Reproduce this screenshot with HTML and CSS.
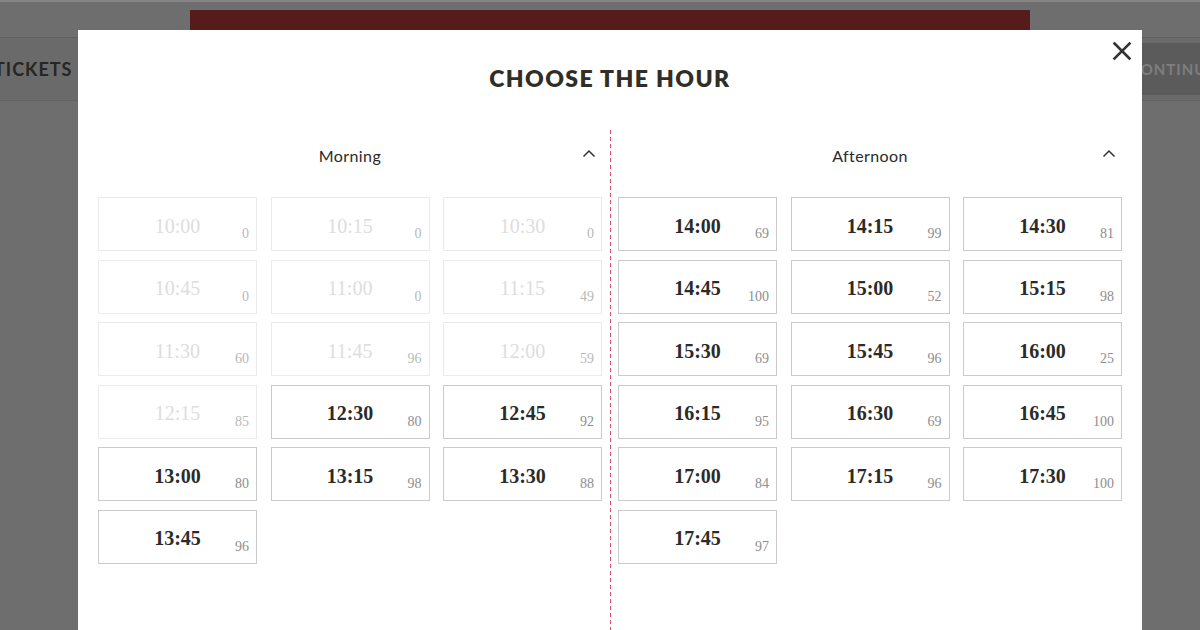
FILE: index.html
```html
<!DOCTYPE html>
<html lang="en">

<head>
    <meta charset="UTF-8">
    <meta name="viewport" content="width=device-width, initial-scale=1.0">
    <title>Choose the hour</title>
    <link rel="stylesheet" href="styles.css">
</head>

<body>
    <!-- page behind the dialog (dimmed) -->
    <div class="page">
        <div class="top_bar">
            <div class="brand_bar"><span class="brand_logo"></span></div>
        </div>
        <div class="nav_bar">
            <span class="nav_title">TICKETS</span>
            <span class="nav_button">CONTINUE</span>
        </div>
    </div>

    <!-- dialog -->
    <div class="hour_dialog">
        <span class="closed">
            <svg width="20" height="20" viewBox="0 0 20 20">
                <path d="M2.5 2.5 L17.5 17.5 M17.5 2.5 L2.5 17.5" stroke="#333" stroke-width="2.6" fill="none" stroke-linecap="square"/>
            </svg>
        </span>
        <div class="title">CHOOSE THE HOUR</div>
        <div class="columns">
            <div class="column">
                <div class="column_head">
                    <span class="column_name">Morning</span>
                    <svg class="chevron" width="14" height="9" viewBox="0 0 14 9">
                        <path d="M1.5 7.5 L7 2 L12.5 7.5" stroke="#333" stroke-width="1.5" fill="none"/>
                    </svg>
                </div>
                <div class="slots">
                    <div class="slot off"><span class="time">10:00</span><span class="count">0</span></div>
                    <div class="slot off"><span class="time">10:15</span><span class="count">0</span></div>
                    <div class="slot off"><span class="time">10:30</span><span class="count">0</span></div>
                    <div class="slot off"><span class="time">10:45</span><span class="count">0</span></div>
                    <div class="slot off"><span class="time">11:00</span><span class="count">0</span></div>
                    <div class="slot off"><span class="time">11:15</span><span class="count">49</span></div>
                    <div class="slot off"><span class="time">11:30</span><span class="count">60</span></div>
                    <div class="slot off"><span class="time">11:45</span><span class="count">96</span></div>
                    <div class="slot off"><span class="time">12:00</span><span class="count">59</span></div>
                    <div class="slot off"><span class="time">12:15</span><span class="count">85</span></div>
                    <div class="slot"><span class="time">12:30</span><span class="count">80</span></div>
                    <div class="slot"><span class="time">12:45</span><span class="count">92</span></div>
                    <div class="slot"><span class="time">13:00</span><span class="count">80</span></div>
                    <div class="slot"><span class="time">13:15</span><span class="count">98</span></div>
                    <div class="slot"><span class="time">13:30</span><span class="count">88</span></div>
                    <div class="slot"><span class="time">13:45</span><span class="count">96</span></div>
                </div>
            </div>
            <div class="divider"></div>
            <div class="column">
                <div class="column_head">
                    <span class="column_name">Afternoon</span>
                    <svg class="chevron" width="14" height="9" viewBox="0 0 14 9">
                        <path d="M1.5 7.5 L7 2 L12.5 7.5" stroke="#333" stroke-width="1.5" fill="none"/>
                    </svg>
                </div>
                <div class="slots">
                    <div class="slot"><span class="time">14:00</span><span class="count">69</span></div>
                    <div class="slot"><span class="time">14:15</span><span class="count">99</span></div>
                    <div class="slot"><span class="time">14:30</span><span class="count">81</span></div>
                    <div class="slot"><span class="time">14:45</span><span class="count">100</span></div>
                    <div class="slot"><span class="time">15:00</span><span class="count">52</span></div>
                    <div class="slot"><span class="time">15:15</span><span class="count">98</span></div>
                    <div class="slot"><span class="time">15:30</span><span class="count">69</span></div>
                    <div class="slot"><span class="time">15:45</span><span class="count">96</span></div>
                    <div class="slot"><span class="time">16:00</span><span class="count">25</span></div>
                    <div class="slot"><span class="time">16:15</span><span class="count">95</span></div>
                    <div class="slot"><span class="time">16:30</span><span class="count">69</span></div>
                    <div class="slot"><span class="time">16:45</span><span class="count">100</span></div>
                    <div class="slot"><span class="time">17:00</span><span class="count">84</span></div>
                    <div class="slot"><span class="time">17:15</span><span class="count">96</span></div>
                    <div class="slot"><span class="time">17:30</span><span class="count">100</span></div>
                    <div class="slot"><span class="time">17:45</span><span class="count">97</span></div>
                </div>
            </div>
        </div>
    </div>
</body>

</html>
```

FILE: styles.css
```css
body,html {
    margin: 0;
    padding: 0;
}
body {
    width: 1200px;
    height: 630px;
    overflow: hidden;
    background-color: #6e6e6e;
    font-family: 'Lato', 'Open Sans', sans-serif;
}
.page {
    border-top: 2px solid #858585;
}
.top_bar {
    padding-top: 8px;
}
.brand_bar {
    margin-left: 190px;
    width: 840px;
    height: 27px;
    background-color: #561c1c;
}
.nav_bar {
    display: flex;
    align-items: center;
    justify-content: space-between;
    height: 62px;
    border-top: 1px solid #616161;
    border-bottom: 1px solid #616161;
    background-color: #6a6a6a;
}
.nav_title {
    margin-left: -6px;
    font-size: 18px;
    font-weight: 700;
    letter-spacing: 1px;
    color: #262626;
}
.nav_button {
    margin-right: -60px;
    padding-left: 15px;
    width: 130px;
    height: 52px;
    line-height: 52px;
    background-color: #5b5b5b;
    font-size: 15px;
    font-weight: 700;
    letter-spacing: 1px;
    color: #7e7e7e;
}
/* dialog */
.hour_dialog {
    position: absolute;
    left: 78px;
    top: 30px;
    width: 1064px;
    height: 620px;
    padding: 33px 20px 0;
    box-sizing: border-box;
    background-color: #ffffff;
    display: flex;
    flex-direction: column;
}
.closed {
    position: absolute;
    right: 10px;
    top: 11px;
    width: 20px;
    height: 20px;
}
.title {
    height: 30px;
    line-height: 30px;
    text-align: center;
    font-size: 23px;
    font-weight: 800;
    letter-spacing: 1.4px;
    color: #2f2f27;
}
.columns {
    flex: 1;
    display: flex;
    margin-top: 37px;
}
.column {
    width: 504px;
}
.divider {
    width: 1px;
    margin: 0 7px 0 8px;
    background: repeating-linear-gradient(to bottom, #d64f6c 0, #d64f6c 4px, transparent 4px, transparent 7px);
}
.column_head {
    display: grid;
    grid-template-columns: 1fr auto 1fr;
    align-items: center;
    height: 50px;
}
.column_name {
    grid-column: 2;
    font-size: 16px;
    letter-spacing: 0.4px;
    color: #2a2a2a;
}
.chevron {
    grid-column: 3;
    justify-self: end;
    margin-right: 6px;
    margin-top: -3px;
}
.slots {
    display: grid;
    grid-template-columns: repeat(3, 1fr);
    grid-auto-rows: 54px;
    column-gap: 13.5px;
    row-gap: 8.6px;
    margin-top: 17px;
}
.slot {
    display: grid;
    border: 1px solid #cbcbcb;
    box-sizing: border-box;
    cursor: pointer;
}
.time,.count {
    grid-area: 1 / 1;
    font-family: 'Liberation Serif', 'DejaVu Serif', serif;
}
.time {
    justify-self: center;
    align-self: center;
    padding-top: 4px;
    font-size: 20px;
    font-weight: 700;
    color: #2b2b2b;
}
.count {
    justify-self: end;
    align-self: end;
    padding: 0 7px 9px 0;
    font-size: 14px;
    line-height: 1;
    color: #8e8e8e;
}
.slot.off {
    border-color: #ebebeb;
    cursor: default;
}
.slot.off .time {
    font-weight: 400;
    color: #dddddd;
}
.slot.off .count {
    color: #b8b8b8;
}
```
